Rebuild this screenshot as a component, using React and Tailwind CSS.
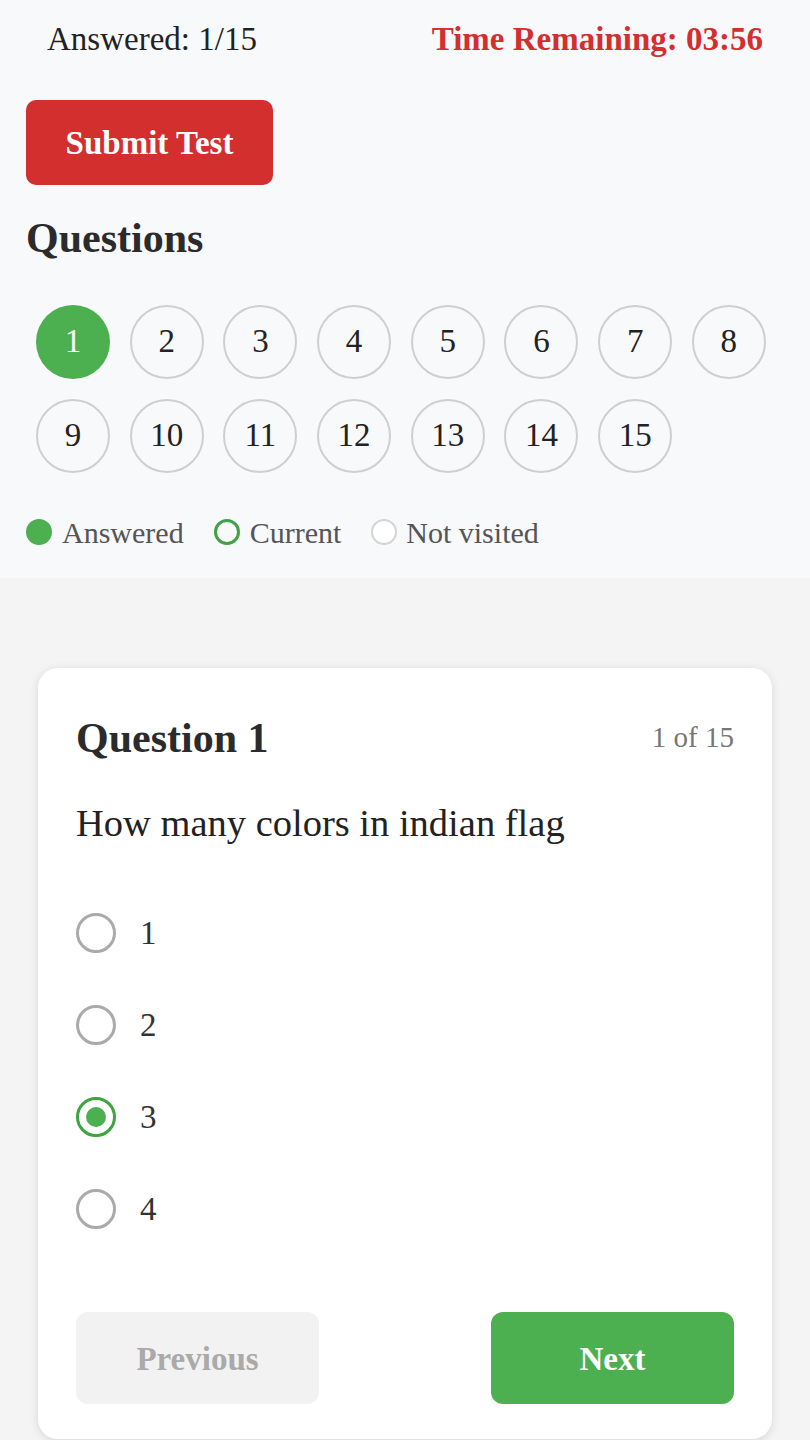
import { useState } from "react";

const TOTAL = 15;
const options = ["1", "2", "3", "4"];

const App = () => {
  const [selected, setSelected] = useState(2);
  const current = 1;
  const answered = [1];

  return (
    <div className="min-h-[1440px] bg-[#f4f4f4] font-['Liberation_Serif',serif] text-[#222]">
      {/* Top panel */}
      <div className="bg-[#f8f9fb] px-[26px] pb-[31px]">
        <div className="h-[80px] flex items-center justify-between px-[21px] text-[33px]">
          <span className="text-[#222]">Answered: {answered.length}/{TOTAL}</span>
          <span className="font-bold text-[#d32f2f]">Time Remaining: 03:56</span>
        </div>

        <button className="mt-[20px] h-[85px] w-[247px] rounded-[10px] bg-[#d32f2f] text-white text-[33px] font-bold pt-[3px]">
          Submit Test
        </button>

        <h2 className="mt-[30px] h-[46px] leading-[46px] text-[42px] font-bold text-[#2b2b2b]">Questions</h2>

        <div className="mt-[44px] pl-[10px] grid grid-cols-[repeat(8,74px)] gap-x-[19.7px] gap-y-[20px]">
          {Array.from({ length: TOTAL }, (_, i) => i + 1).map((n) => {
            const isAnswered = answered.includes(n);
            return (
              <div
                key={n}
                className={
                  isAnswered
                    ? "size-[74px] rounded-full bg-[#4caf50] text-white flex items-center justify-center text-[33px]"
                    : "size-[74px] rounded-full border-2 border-[#cfcfcf] text-[#222] flex items-center justify-center text-[33px]"
                }
              >
                {n}
              </div>
            );
          })}
        </div>

        {/* Legend */}
        <div className="mt-[44px] h-[30px] flex items-center text-[30px] text-[#555]">
          <span className="size-[26px] rounded-full bg-[#4caf50]" />
          <span className="ml-[10px]">Answered</span>
          <span className="ml-[30px] size-[26px] rounded-full border-[3px] border-[#43a047]" />
          <span className="ml-[10px]">Current</span>
          <span className="ml-[30px] size-[26px] rounded-full border-2 border-[#d4d4d4] bg-white" />
          <span className="ml-[9px]">Not visited</span>
        </div>
      </div>

      {/* Question card */}
      <div className="mx-[38px] mt-[90px] rounded-[20px] bg-white shadow-[0_2px_10px_rgba(0,0,0,0.12)] px-[38px] pt-[45px] pb-[35px]">
        <div className="h-[50px] flex items-center justify-between">
          <h3 className="text-[42px] font-bold text-[#2b2b2b]">Question {current}</h3>
          <span className="text-[29px] text-[#777]">{current} of {TOTAL}</span>
        </div>
        <p className="mt-[38px] h-[44px] leading-[44px] text-[38.5px] text-[#222]">How many colors in indian flag</p>

        <div className="mt-[58px] flex flex-col gap-[32px]">
          {options.map((opt, i) => (
            <label key={opt} className="h-[60px] flex items-center cursor-pointer" onClick={() => setSelected(i)}>
              {selected === i ? (
                <span className="size-[40px] rounded-full border-[3px] border-[#3da53d] flex items-center justify-center">
                  <span className="size-[20px] rounded-full bg-[#4caf50]" />
                </span>
              ) : (
                <span className="size-[40px] rounded-full border-[3px] border-[#aaaaaa]" />
              )}
              <span className="ml-[24px] pt-[2px] text-[33px] text-[#333]">{opt}</span>
            </label>
          ))}
        </div>

        <div className="mt-[73px] flex justify-between">
          <button className="h-[92px] w-[243px] rounded-[12px] bg-[#f2f2f2] text-[#aaaaaa] text-[33px] font-bold pt-[4px]">
            Previous
          </button>
          <button className="h-[92px] w-[243px] rounded-[12px] bg-[#4caf50] text-white text-[33px] font-bold pt-[4px]">
            Next
          </button>
        </div>
      </div>
    </div>
  );
};

export default App;
